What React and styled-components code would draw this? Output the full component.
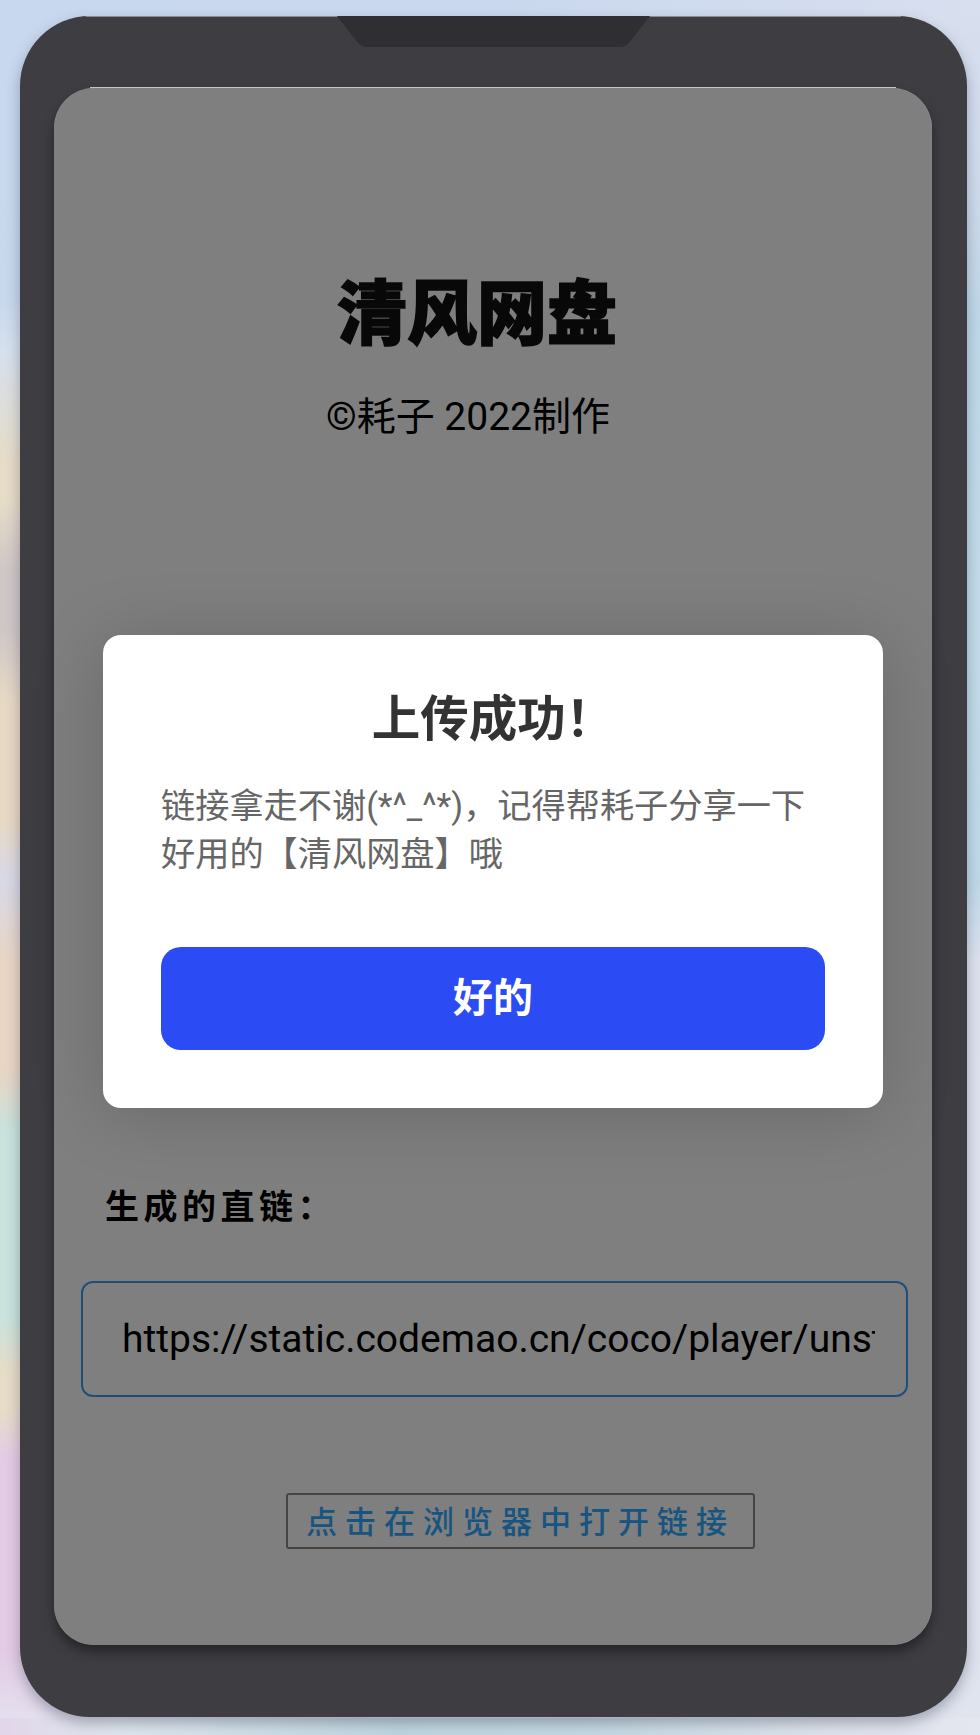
import styled, { createGlobalStyle } from 'styled-components';

const GlobalStyle = createGlobalStyle`
  html, body {
    margin: 0;
    padding: 0;
  }

  body {
    width: 980px;
    height: 1735px;
    overflow: hidden;
    font-family: Roboto, "Noto Sans CJK SC", sans-serif;
    background:
      linear-gradient(90deg, #e2d6ea 0, #dfe6ee 12%, #c0d6e0 40%, #c4d8e2 60%, #dfe3ec 85%, #e4e6f0 100%) 0 1718px / 100% 17px no-repeat,
      linear-gradient(90deg, #c8d8ef 0, #c9d8ee 50%, #d8dfef 100%) 0 0 / 100% 16px no-repeat,
      linear-gradient(180deg,
        #c8d8ef 0, #c8d8ec 300px, #d6e0ee 350px, #e6dcc8 460px, #e6dcc8 500px, #cfc6c6 570px, #cfc6c6 630px,
        #e7d8c4 700px, #e7d8c4 820px, #d8d8e6 880px, #e8d5c4 960px, #e8d5c4 1070px, #c9e2dc 1130px,
        #c9e2dc 1320px, #e6dcc8 1370px, #e6dcc8 1410px, #e3cbe6 1460px, #e3cbe6 1650px, #e4e4f0 1735px) 0 0 / 50% 100% no-repeat,
      linear-gradient(180deg,
        #d8dfef 0, #d0dcec 180px, #bfd8e8 320px, #c4dcea 620px, #c0d9e8 880px, #dde2ee 960px, #e0e4ef 1735px) 100% 0 / 50% 100% no-repeat;
  }
`;

const Phone = styled.main`
  position: relative;
  box-sizing: border-box;
  width: 947px;
  height: 1701px;
  margin: 16px 0 0 20px;
  padding: 0 35px 72px 34px;
  display: flex;
  flex-direction: column;
  background: #3e3d42;
  border-radius: 70px;
  box-shadow: 0 6px 14px rgba(40, 50, 70, 0.35);

  &::before {
    content: '';
    position: absolute;
    top: 0;
    left: 66px;
    right: 66px;
    height: 1px;
    background: #8b8c99;
  }
`;

const Notch = styled.div`
  flex: none;
  width: 313px;
  height: 31px;
  margin: 0 0 41px 283px;
  background: #2f2e33;
  clip-path: polygon(0 0, 100% 0, 94% 78%, 92.5% 94%, 91% 100%, 9% 100%, 7.5% 94%, 6% 78%);
`;

const Screen = styled.section`
  position: relative;
  flex: 1;
  display: flex;
  flex-direction: column;
  background: #fff;
  border-radius: 40px;
  box-shadow: 0 7px 12px rgba(0, 0, 0, 0.4);

  &::before {
    content: '';
    position: absolute;
    top: -1px;
    left: 36px;
    right: 36px;
    height: 1px;
    background: #c4c5d2;
  }
`;

const Brand = styled.h1`
  margin: 173px 0 0 283px;
  font-family: "Noto Sans CJK SC", sans-serif;
  font-size: 70px;
  font-weight: 900;
  line-height: 96px;
  color: #111;
  -webkit-text-stroke: 1.5px #111;
`;

const Credit = styled.p`
  margin: 35px 0 0 272px;
  font-size: 39px;
  line-height: 50px;
  color: #000;
`;

const LinkLabel = styled.h2`
  margin: 740px 0 0 51px;
  font-family: "Noto Sans CJK SC", sans-serif;
  font-size: 34px;
  font-weight: 700;
  line-height: 46px;
  letter-spacing: 4.5px;
  color: #000;
`;

const LinkInput = styled.input`
  box-sizing: border-box;
  width: 827px;
  height: 116px;
  margin: 53px 0 0 27px;
  padding: 0 31px 0 39px;
  background: transparent;
  border: 2px solid #3f9cf5;
  border-radius: 12px;
  outline: none;
  font-family: Roboto, sans-serif;
  font-size: 39px;
  color: #000;
`;

const OpenLink = styled.a`
  box-sizing: border-box;
  display: flex;
  align-items: center;
  justify-content: center;
  width: 469px;
  height: 56px;
  margin: 96px 0 0 232px;
  padding-bottom: 3px;
  border: 2.5px solid #8a8a8a;
  border-radius: 3px;
  font-family: "Noto Sans CJK SC", sans-serif;
  font-size: 31px;
  font-weight: 500;
  letter-spacing: 8px;
  color: #2fa8ff;
  text-decoration: none;
`;

const Overlay = styled.div`
  position: absolute;
  inset: 0;
  display: flex;
  align-items: center;
  justify-content: center;
  padding-top: 10px;
  box-sizing: border-box;
  background: rgba(0, 0, 0, 0.5);
  border-radius: 40px;
`;

const Dialog = styled.div`
  box-sizing: border-box;
  width: 780px;
  height: 473px;
  padding: 55px 58px 58px;
  display: flex;
  flex-direction: column;
  background: #fff;
  border-radius: 18px;
  box-shadow: 0 6px 70px rgba(0, 0, 0, 0.18);
`;

const DialogTitle = styled.h3`
  margin: 0;
  text-align: center;
  font-size: 48.5px;
  font-weight: 700;
  line-height: 60px;
  color: #333;
`;

const DialogText = styled.p`
  margin: 32px 0 0;
  font-size: 34.2px;
  line-height: 48px;
  color: #666;
`;

const ConfirmButton = styled.button`
  height: 103px;
  margin-top: auto;
  padding: 0 0 8px;
  background: #2b4cf5;
  border: 0;
  border-radius: 20px;
  font-family: Roboto, "Noto Sans CJK SC", sans-serif;
  font-size: 40px;
  font-weight: 700;
  color: #fff;
`;

const directLink = 'https://static.codemao.cn/coco/player/unstable/qingfeng-netdisk-upload-file-link.html';

export default function App() {
  return (
    <>
      <GlobalStyle />
      <Phone>
        <Notch />
        <Screen>
          <Brand>清风网盘</Brand>
          <Credit>©耗子 2022制作</Credit>
          <LinkLabel>生成的直链：</LinkLabel>
          <LinkInput readOnly value={directLink} />
          <OpenLink href="#">点击在浏览器中打开链接</OpenLink>
          <Overlay>
            <Dialog>
              <DialogTitle>上传成功！</DialogTitle>
              <DialogText>链接拿走不谢(*^_^*)，记得帮耗子分享一下好用的【清风网盘】哦</DialogText>
              <ConfirmButton>好的</ConfirmButton>
            </Dialog>
          </Overlay>
        </Screen>
      </Phone>
    </>
  );
}
